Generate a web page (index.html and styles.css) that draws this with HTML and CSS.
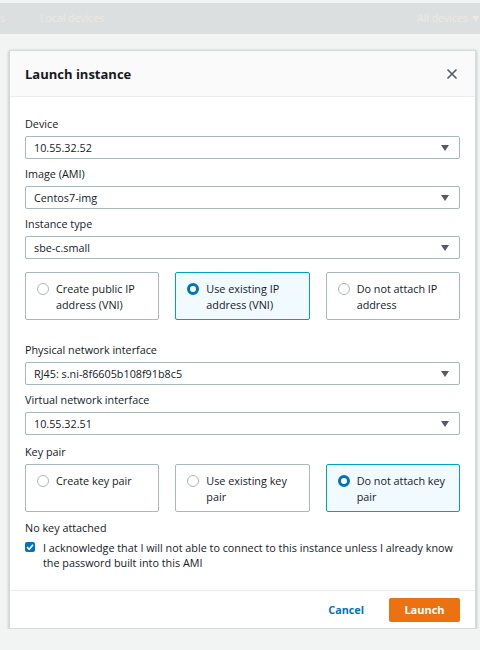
FILE: index.html
```html
<!DOCTYPE html>
<html>
<head>
    <meta charset="utf-8">
    <title>Launch instance</title>
    <link rel="stylesheet" href="styles.css">
</head>
<body>
    <div class="topbar">
        <span class="crumb-end">s</span>
        <span class="crumb">Local devices</span>
        <span class="filter">All devices &#9660;</span>
    </div>

    <div class="modal">
        <div class="modal-head">
            <h2>Launch instance</h2>
            <svg class="close" width="12" height="12" viewBox="0 0 12 12">
                <path d="M1.5 1.5 L10.5 10.5 M10.5 1.5 L1.5 10.5" stroke="#545b64" stroke-width="1.6" fill="none"/>
            </svg>
        </div>

        <div class="modal-body">
            <div class="field">
                <div class="label">Device</div>
                <div class="select">10.55.32.52<span class="arrow"></span></div>
            </div>
            <div class="field">
                <div class="label">Image (AMI)</div>
                <div class="select">Centos7-img<span class="arrow"></span></div>
            </div>
            <div class="field">
                <div class="label">Instance type</div>
                <div class="select">sbe-c.small<span class="arrow"></span></div>
            </div>

            <div class="tiles tiles-ip">
                <div class="tile"><span class="radio"></span><span>Create public IP address (VNI)</span></div>
                <div class="tile on"><span class="radio"></span><span>Use existing IP address (VNI)</span></div>
                <div class="tile"><span class="radio"></span><span>Do not attach IP address</span></div>
            </div>

            <div class="field">
                <div class="label">Physical network interface</div>
                <div class="select">RJ45: s.ni-8f6605b108f91b8c5<span class="arrow"></span></div>
            </div>
            <div class="field">
                <div class="label">Virtual network interface</div>
                <div class="select">10.55.32.51<span class="arrow"></span></div>
            </div>

            <div class="label keypair">Key pair</div>
            <div class="tiles tiles-key">
                <div class="tile"><span class="radio"></span><span>Create key pair</span></div>
                <div class="tile"><span class="radio"></span><span>Use existing key pair</span></div>
                <div class="tile on"><span class="radio"></span><span>Do not attach key pair</span></div>
            </div>

            <div class="label nokey">No key attached</div>
            <div class="ack">
                <span class="check">
                    <svg width="10" height="10" viewBox="0 0 10 10">
                        <path d="M2 5.2 L4.2 7.3 L8 2.8" stroke="#fff" stroke-width="1.6" fill="none"/>
                    </svg>
                </span>
                <span>I acknowledge that I will not able to connect to this instance unless I already know the password built into this AMI</span>
            </div>
        </div>

        <div class="modal-foot">
            <a class="cancel">Cancel</a>
            <button class="launch">Launch</button>
        </div>
    </div>
</body>
</html>
```

FILE: styles.css
```css
body {
    margin: 0;
    background-color: #f2f3f3;
    font-family: "Open Sans", "Liberation Sans", sans-serif;
    font-size: 10.8px;
    color: #16191f;
}

.topbar {
    margin-top: 3px;
    height: 31px;
    background-color: #dcdfe0;
    position: relative;
    color: #eee8e1;
    font-size: 10.5px;
    line-height: 31px;
}

    .topbar .crumb-end {
        position: absolute;
        left: 0;
    }

    .topbar .crumb {
        position: absolute;
        left: 40px;
    }

    .topbar .filter {
        position: absolute;
        left: 417px;
        white-space: nowrap;
    }

.modal {
    margin: 16px 0 0 9px;
    width: 465px;
    background-color: #fff;
    border: 1px solid #d5dbdb;
    box-shadow: 0 1px 3px rgba(0, 28, 36, 0.3);
}

.modal-head {
    height: 45px;
    background-color: #fafafa;
    border-bottom: 1px solid #eaeded;
    display: flex;
    align-items: center;
    justify-content: space-between;
    padding: 0 17px 0 15px;
}

    .modal-head h2 {
        margin: 0;
        font-size: 13px;
        font-weight: 700;
        color: #16191f;
    }

.modal-body {
    padding: 19px 15px 20px 15px;
}

.label {
    line-height: 16px;
    margin-bottom: 4px;
}

.field {
    margin-bottom: 7px;
}

.select {
    height: 21px;
    border: 1px solid #aab7b8;
    border-radius: 2px;
    padding: 0 8px;
    line-height: 21px;
    position: relative;
}

    .select .arrow {
        position: absolute;
        right: 10px;
        top: 8px;
        border-left: 4px solid transparent;
        border-right: 4px solid transparent;
        border-top: 6px solid #545b64;
    }

.tiles {
    display: grid;
    grid-template-columns: 1fr 1fr 1fr;
    gap: 16px;
}

.tiles-ip {
    margin: 13px 0 22px 0;
}

.keypair {
    margin-top: 9px;
}

.tiles-key {
    margin-bottom: 8px;
}

.tile {
    border: 1px solid #aab7b8;
    border-radius: 2px;
    padding: 8px 10px 0 11px;
    box-sizing: border-box;
    height: 48px;
    display: flex;
    gap: 7px;
    line-height: 16px;
}

    .tile.on {
        border-color: #00a1c9;
        background-color: #f1faff;
    }

.radio {
    flex: none;
    width: 12px;
    height: 12px;
    box-sizing: border-box;
    border: 1px solid #aab7b8;
    border-radius: 50%;
    background-color: #fff;
    margin-top: 2px;
}

    .tile.on .radio {
        border: 3.5px solid #0073bb;
    }

.nokey {
    margin-bottom: 4px;
}

.ack {
    display: flex;
    gap: 8px;
    line-height: 15px;
}

.check {
    flex: none;
    width: 10px;
    height: 10px;
    background-color: #0073bb;
    border-radius: 2px;
    margin-top: 2px;
    display: flex;
}

.modal-foot {
    border-top: 1px solid #eaeded;
    height: 37px;
    display: flex;
    align-items: center;
    justify-content: flex-end;
    padding-right: 15px;
}

.cancel {
    color: #0073bb;
    font-weight: 700;
    margin-right: 25px;
}

.launch {
    width: 71px;
    height: 24px;
    border: none;
    border-radius: 2px;
    background-color: #ec7211;
    color: #fff;
    font-family: "Open Sans", "Liberation Sans", sans-serif;
    font-size: 11px;
    font-weight: 700;
}
```
